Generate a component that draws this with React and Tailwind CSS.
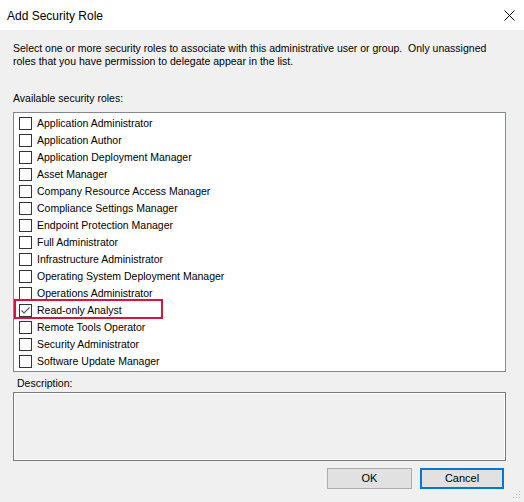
const roles = [
  'Application Administrator',
  'Application Author',
  'Application Deployment Manager',
  'Asset Manager',
  'Company Resource Access Manager',
  'Compliance Settings Manager',
  'Endpoint Protection Manager',
  'Full Administrator',
  'Infrastructure Administrator',
  'Operating System Deployment Manager',
  'Operations Administrator',
  'Read-only Analyst',
  'Remote Tools Operator',
  'Security Administrator',
  'Software Update Manager',
]

const font = { fontFamily: '"Liberation Sans", Arial, sans-serif' }

function Checkbox({ checked }) {
  return (
    <span className="w-[13px] h-[13px] border border-[#333333] bg-white flex items-center justify-center shrink-0">
      {checked && (
        <svg width="11" height="11" viewBox="0 0 11 11">
          <path d="M1.5 5.5 L4 8 L9.5 2.5" fill="none" stroke="#555" strokeWidth="1.1" />
        </svg>
      )}
    </span>
  )
}

function RoleRow({ label, checked, highlight }) {
  return (
    <div className="relative h-[17px] flex items-center pl-[5px]">
      <Checkbox checked={checked} />
      <span className="ml-[5px] text-[10.5px] leading-[13px] text-black whitespace-nowrap">{label}</span>
      {highlight && (
        <span className="absolute left-0 top-[-3px] w-[149px] h-[20px] border-2 border-[#d6143c]" />
      )}
    </div>
  )
}

export default function App() {
  return (
    <div className="w-[524px] h-[502px] bg-[#f0f0f0] flex flex-col relative overflow-hidden" style={font}>
      <div className="h-[30px] bg-white flex items-center justify-between shrink-0">
        <span className="pl-[7px] text-[12px] text-[#000] pt-[1px]">Add Security Role</span>
        <svg className="mr-[9px]" width="11" height="11" viewBox="0 0 11 11">
          <path d="M0.5 0.5 L10.5 10.5 M10.5 0.5 L0.5 10.5" stroke="#000" strokeWidth="1" />
        </svg>
      </div>

      <div className="flex flex-col px-[13px] pr-[18px]">
        <p className="mt-[12px] text-[10.5px] leading-[13px] text-black whitespace-nowrap">
          Select one or more security roles to associate with this administrative user or group.&nbsp; Only unassigned
          <br />
          roles that you have permission to delegate appear in the list.
        </p>

        <span className="mt-[24px] text-[10.5px] leading-[13px] text-black">Available security roles:</span>

        <div className="mt-[7px] h-[260px] w-[493px] bg-white border border-[#828790] pt-[2px]">
          {roles.map((r) => (
            <RoleRow
              key={r}
              label={r}
              checked={r === 'Read-only Analyst'}
              highlight={r === 'Read-only Analyst'}
            />
          ))}
        </div>

        <span className="mt-[5px] ml-[4px] text-[10.5px] leading-[13px] text-black">Description:</span>

        <div className="mt-[2px] h-[69px] w-[493px] border border-[#7a7a7a] shadow-[inset_0_0_0_1px_#ffffff] bg-[#f0f0f0]" />

        <div className="mt-[7px] flex justify-end gap-[8px] pr-[2px]">
          <button className="w-[85px] h-[21px] bg-[#e1e1e1] border border-[#adadad] text-[11px] text-black">
            OK
          </button>
          <button className="w-[84px] h-[21px] bg-[#e1e1e1] border-2 border-[#0078d7] text-[11px] text-black">
            Cancel
          </button>
        </div>
      </div>

      <svg className="absolute right-[3px] bottom-[3px]" width="9" height="9" viewBox="0 0 9 9">
        <rect x="7" y="1" width="1" height="1" fill="#b8b8b8" />
        <rect x="4" y="4" width="1" height="1" fill="#b8b8b8" />
        <rect x="7" y="4" width="1" height="1" fill="#b8b8b8" />
        <rect x="1" y="7" width="1" height="1" fill="#b8b8b8" />
        <rect x="4" y="7" width="1" height="1" fill="#b8b8b8" />
        <rect x="7" y="7" width="1" height="1" fill="#b8b8b8" />
      </svg>
    </div>
  )
}
